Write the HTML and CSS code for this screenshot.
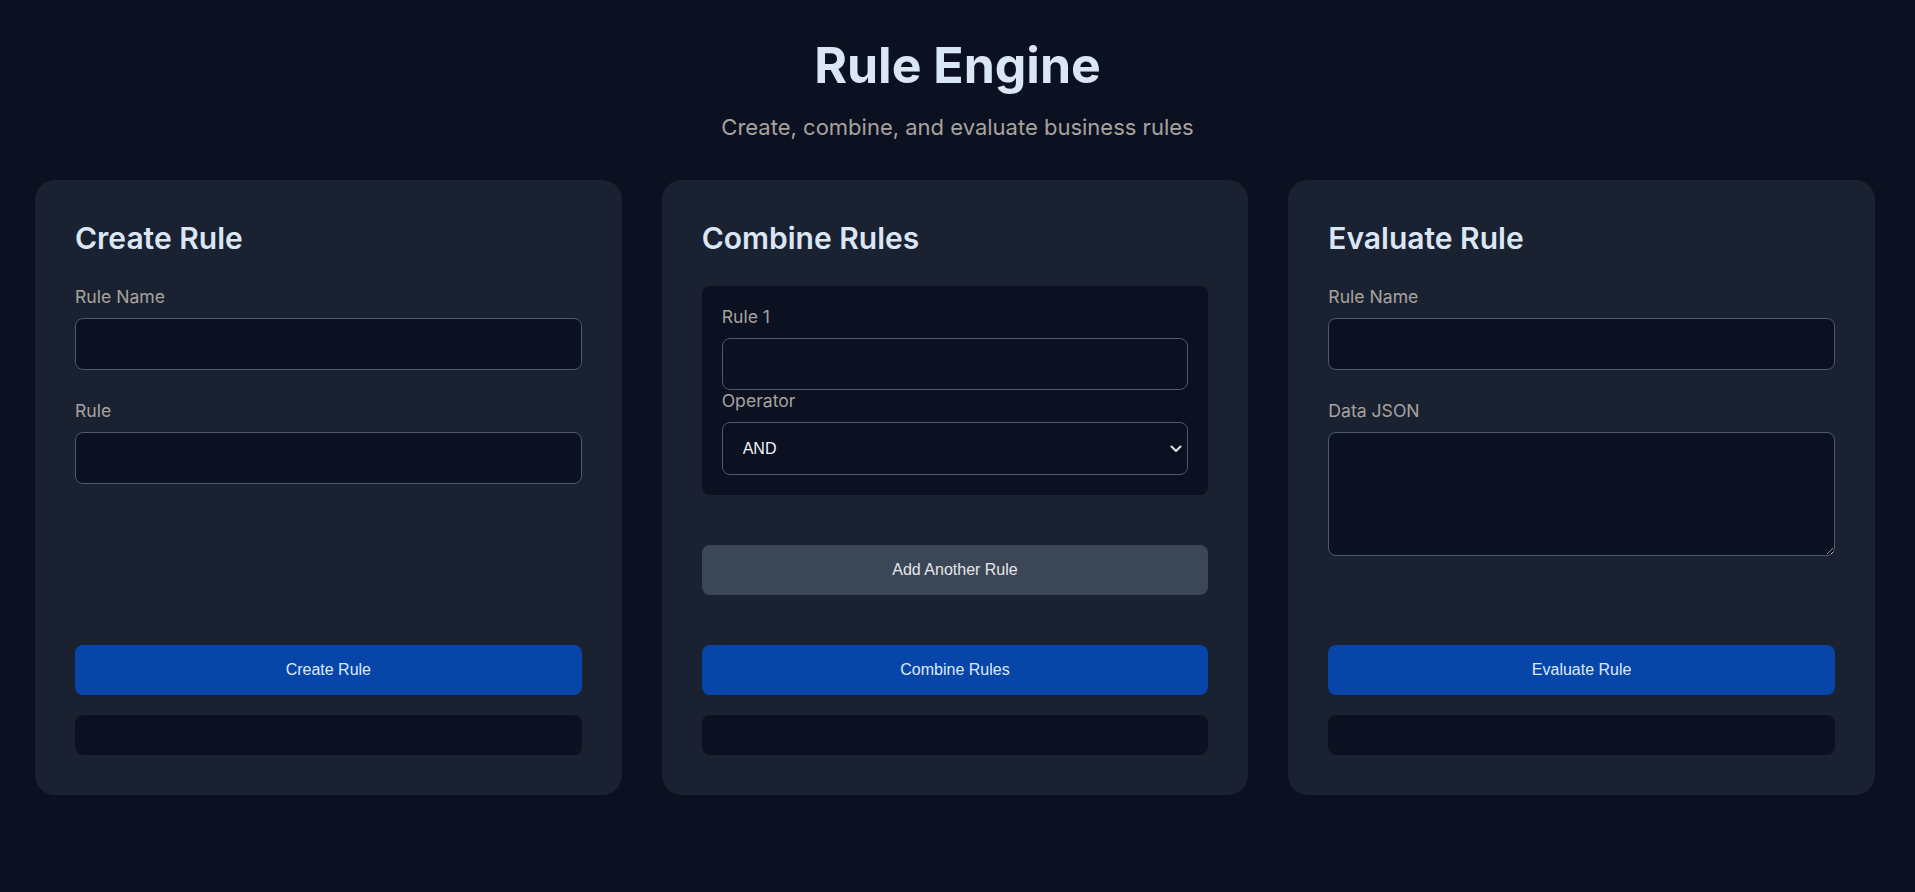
FILE: index.html
```html
<!DOCTYPE html>
<html lang="en">
<head>
<meta charset="utf-8">
<title>Rule Engine</title>
<link rel="stylesheet" href="styles.css">
</head>
<body>
<header class="page-header">
  <h1 class="page-title">Rule Engine</h1>
  <p class="page-subtitle">Create, combine, and evaluate business rules</p>
</header>
<main class="panels">
  <section class="card">
    <h2 class="card-title">Create Rule</h2>
    <div class="field">
      <label class="field-label">Rule Name</label>
      <input class="text-input" type="text">
    </div>
    <div class="field">
      <label class="field-label">Rule</label>
      <input class="text-input" type="text">
    </div>
    <div class="card-actions">
      <button class="btn btn-primary">Create Rule</button>
      <div class="result"></div>
    </div>
  </section>

  <section class="card">
    <h2 class="card-title">Combine Rules</h2>
    <div class="rule-box">
      <label class="field-label">Rule 1</label>
      <input class="text-input" type="text">
      <label class="field-label">Operator</label>
      <div class="select-wrap">
        <select class="select-input">
          <option>AND</option>
          <option>OR</option>
        </select>
        <svg class="select-arrow" width="12" height="8" viewBox="0 0 12 8" aria-hidden="true"><path d="M1.5 1.5 L6 6 L10.5 1.5" fill="none" stroke="currentColor" stroke-width="2" stroke-linecap="round" stroke-linejoin="round"/></svg>
      </div>
    </div>
    <button class="btn btn-secondary">Add Another Rule</button>
    <div class="card-actions">
      <button class="btn btn-primary">Combine Rules</button>
      <div class="result"></div>
    </div>
  </section>

  <section class="card">
    <h2 class="card-title">Evaluate Rule</h2>
    <div class="field">
      <label class="field-label">Rule Name</label>
      <input class="text-input" type="text">
    </div>
    <div class="field">
      <label class="field-label">Data JSON</label>
      <textarea class="text-input text-area"></textarea>
    </div>
    <div class="card-actions">
      <button class="btn btn-primary">Evaluate Rule</button>
      <div class="result"></div>
    </div>
  </section>
</main>
</body>
</html>
```
FILE: styles.css
```css
* {
  box-sizing: border-box;
}

html, body {
  margin: 0;
  padding: 0;
}

body {
  background: #0b1120;
  font-family: Inter, "Noto Sans", sans-serif;
  color: #dde8f6;
  min-height: 100vh;
}

.page-header {
  text-align: center;
  padding-top: 35px;
}

.page-title {
  margin: 0;
  font-size: 50px;
  font-weight: 700;
  line-height: normal;
  color: #dbe6f5;
}

.page-subtitle {
  margin: 19px 0 0;
  font-size: 22px;
  line-height: normal;
  color: #a8a29e;
}

.panels {
  display: grid;
  grid-template-columns: repeat(3, 1fr);
  gap: 40px;
  padding: 40px 40px 0 35px;
}

.card {
  background: #1a2231;
  border-radius: 20px;
  padding: 40px;
  display: flex;
  flex-direction: column;
}

.card-title {
  margin: 0 0 30px;
  font-size: 30px;
  font-weight: 600;
  line-height: normal;
  color: #dbe6f5;
}

.field {
  margin-bottom: 30px;
}

.field:last-of-type {
  margin-bottom: 0;
}

.field-label {
  display: block;
  font-size: 17.6px;
  line-height: 22px;
  color: #a8a29e;
  margin-bottom: 10px;
}

.text-input {
  display: block;
  width: 100%;
  height: 52px;
  margin: 0;
  padding: 0 16px;
  background: #0b1120;
  border: 1px solid #4a5a73;
  border-radius: 8px;
  color: #e2e8f0;
  font-family: Inter, sans-serif;
  font-size: 16px;
  outline: none;
}

.text-area {
  height: 124px;
  padding: 12px 16px;
  resize: vertical;
  color-scheme: dark;
}

.rule-box {
  background: #0b1120;
  border-radius: 8px;
  padding: 20px;
}

.select-wrap {
  position: relative;
}

.select-input {
  display: block;
  width: 100%;
  height: 53px;
  margin: 0;
  padding: 0 20px;
  background: #0b1120;
  border: 1px solid #4a5a73;
  border-radius: 8px;
  color: #f1f5f9;
  font-family: "Liberation Sans", Arial, sans-serif;
  font-size: 16px;
  appearance: none;
  -webkit-appearance: none;
  outline: none;
}

.select-arrow {
  position: absolute;
  right: 6px;
  top: 23px;
  color: #e5e7eb;
  pointer-events: none;
}

.btn {
  display: block;
  width: 100%;
  height: 50px;
  border: none;
  border-radius: 8px;
  font-family: "Liberation Sans", Arial, sans-serif;
  font-size: 16px;
  cursor: pointer;
}

.btn-primary {
  background: #0845a8;
  color: #dbeafe;
}

.btn-secondary {
  margin-top: 50px;
  background: #3b4656;
  color: #e5e7eb;
}

.card-actions {
  margin-top: auto;
  padding-top: 50px;
  display: flex;
  flex-direction: column;
  gap: 20px;
}

.result {
  height: 40px;
  background: #0c1221;
  border-radius: 8px;
}
```
